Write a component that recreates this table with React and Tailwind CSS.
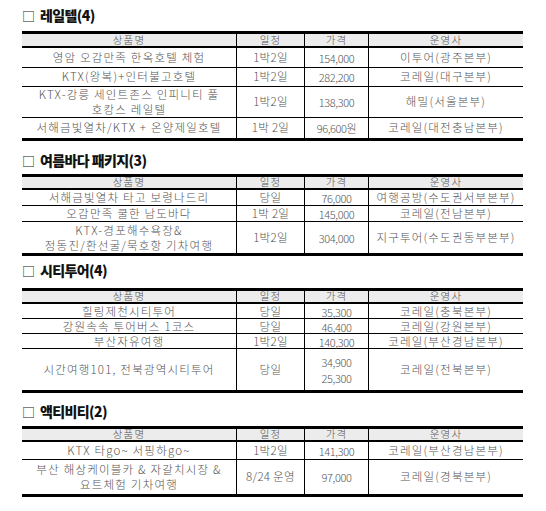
const font = { fontFamily: '"Noto Sans CJK KR", "Noto Sans", sans-serif' };

const sections = [
  {
    title: "레일텔(4)",
    headClass: "mt-[7px] mb-[8px]",
    headerH: "h-[14px]",
    rows: [
      { h: "h-[20px]", name: ["영암 오감만족 한옥호텔 체험"], days: "1박2일", price: ["154,000"], op: "이투어(광주본부)" },
      { h: "h-[19px]", name: ["KTX(왕복)+인터불고호텔"], days: "1박2일", price: ["282,200"], op: "코레일(대구본부)" },
      { h: "h-[31px]", name: ["KTX-강릉 세인트존스 인피니티 풀", "호캉스 레일텔"], days: "1박2일", price: ["138,300"], op: "해밀(서울본부)" },
      { h: "h-[20px]", name: ["서해금빛열차/KTX + 온양제일호텔"], days: "1박 2일", price: ["96,600원"], op: "코레일(대전충남본부)" },
    ],
  },
  {
    title: "여름바다 패키지(3)",
    headClass: "mt-[11px] mb-[6px]",
    headerH: "h-[13px]",
    rows: [
      { h: "h-[16px]", name: ["서해금빛열차 타고 보령나드리"], days: "당일", price: ["76,000"], op: "여행공방(수도권서부본부)" },
      { h: "h-[16px]", name: ["오감만족 쿨한 남도바다"], days: "1박 2일", price: ["145,000"], op: "코레일(전남본부)" },
      { h: "h-[31px]", name: ["KTX-경포해수욕장&", "정동진/환선굴/묵호항 기차여행"], days: "1박2일", price: ["304,000"], op: "지구투어(수도권동부본부)" },
    ],
  },
  {
    title: "시티투어(4)",
    headClass: "mt-[6px] mb-[10px]",
    headerH: "h-[13px]",
    rows: [
      { h: "h-[15px]", name: ["힐링제천시티투어"], days: "당일", price: ["35,300"], op: "코레일(충북본부)" },
      { h: "h-[15px]", name: ["강원속속 투어버스 1코스"], days: "당일", price: ["46,400"], op: "코레일(강원본부)" },
      { h: "h-[15px]", name: ["부산자유여행"], days: "1박2일", price: ["140,300"], op: "코레일(부산경남본부)" },
      { h: "h-[41px]", name: ["시간여행101, 전북광역시티투어"], days: "당일", price: ["34,900", "25,300"], op: "코레일(전북본부)" },
    ],
  },
  {
    title: "액티비티(2)",
    headClass: "mt-[10px] mb-[7px]",
    headerH: "h-[13px]",
    rows: [
      { h: "h-[18px]", name: ["KTX 타go~ 서핑하go~"], days: "1박2일", price: ["141,300"], op: "코레일(부산경남본부)" },
      { h: "h-[34px]", name: ["부산 해상케이블카 & 자갈치시장 &", "요트체험 기차여행"], days: "8/24 운영", price: ["97,000"], op: "코레일(경북본부)" },
    ],
  },
];

const cols = "grid grid-cols-[214px_68px_64px_155px]";

function Cell({ children, first }) {
  return (
    <div className={`flex flex-col items-center justify-center text-center leading-none ${first ? "" : "border-l border-black"}`}>
      {children}
    </div>
  );
}

function Section({ s }) {
  return (
    <div>
      <div className={`flex items-center h-[16px] ${s.headClass}`}>
        <span className="w-[18px] text-[13px] leading-none text-[#222]">□</span>
        <span className="text-[14px] font-black leading-none text-[#111] tracking-[-0.6px]">{s.title}</span>
      </div>
      <div className="w-[501px] border-t-[3px] border-b-[3px] border-black text-[11.5px] font-light text-[#555] tracking-[1.2px]">
        <div className={`${cols} ${s.headerH} bg-[#ececec] border-b-2 border-black text-[10.5px]`}>
          <Cell first>상품명</Cell>
          <Cell>일정</Cell>
          <Cell>가격</Cell>
          <Cell>운영사</Cell>
        </div>
        {s.rows.map((r, i) => (
          <div key={i} className={`${cols} ${r.h} ${i < s.rows.length - 1 ? "border-b border-black" : ""}`}>
            <Cell first>
              {r.name.map((n, j) => (
                <div key={j} className={r.name.length > 1 ? "leading-[15px]" : ""}>{n}</div>
              ))}
            </Cell>
            <Cell><span className="tracking-[0.3px]">{r.days}</span></Cell>
            <Cell>
              {r.price.map((p, j) => (
                <div key={j} className="text-[11px] leading-[16px] tracking-[-0.4px]">{p}</div>
              ))}
            </Cell>
            <Cell>{r.op}</Cell>
          </div>
        ))}
      </div>
    </div>
  );
}

export default function App() {
  return (
    <div className="w-[546px] h-[511px] bg-white pl-[22px] overflow-hidden" style={font}>
      {sections.map((s, i) => (
        <Section key={i} s={s} />
      ))}
    </div>
  );
}
